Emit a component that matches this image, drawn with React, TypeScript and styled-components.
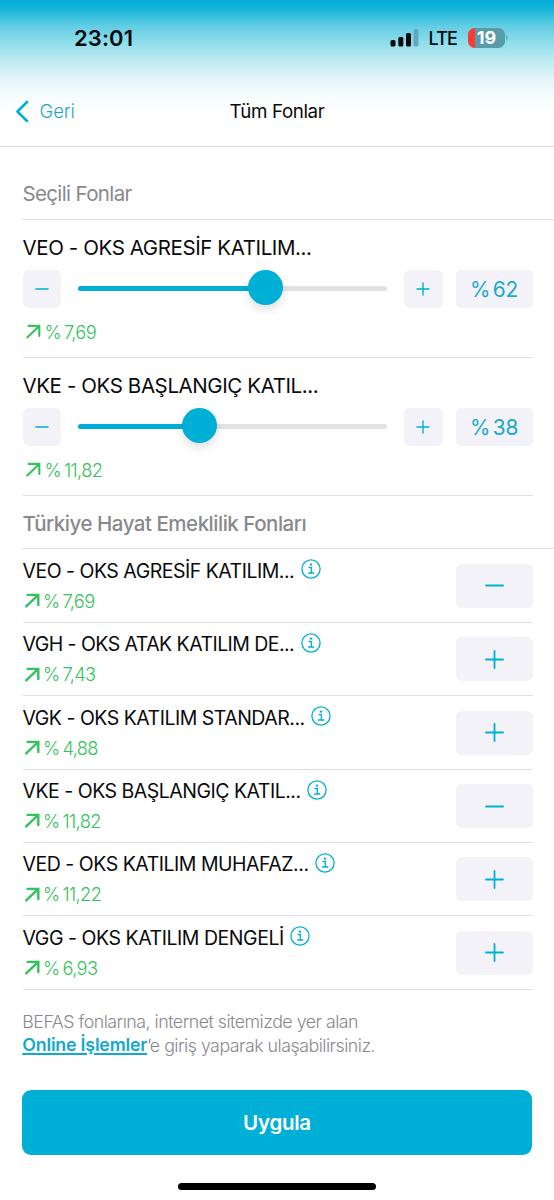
import React, { useState } from "react";
import styled, { createGlobalStyle } from "styled-components";

const CYAN = "#00afd5";
const GREEN = "#34c25e";
const LINE = "#dfe0e2";
const PANEL = "#f2f2f8";
const GRAY = "#88898d";

const GlobalStyle = createGlobalStyle`
  * { box-sizing: border-box; }
  body { margin: 0; background: #fff; font-family: Inter, "Liberation Sans", sans-serif; color: #0a0a0c; }
  button { font: inherit; border: 0; padding: 0; margin: 0; background: none; cursor: pointer; }
  svg { display: block; flex: none; }
`;

const Screen = styled.div`
  width: 554px;
  height: 1200px;
  display: flex;
  flex-direction: column;
  overflow: hidden;
  background: #fff;
`;

const Header = styled.header`
  height: 147px;
  flex: none;
  border-bottom: 1px solid #dcdee0;
  background: linear-gradient(
    #04aed6 0px,
    #12b4d9 8px,
    #62cde4 26px,
    #92dfec 44px,
    #c2ebf3 62px,
    #e4f6fa 80px,
    #f8fdfe 98px,
    #fff 116px
  );
`;

const StatusBar = styled.div`
  height: 75px;
  padding: 0 46px 0 74px;
  display: flex;
  align-items: center;
  color: #04090c;
`;

const Clock = styled.span`
  flex: 1;
  font-size: 22px;
  font-weight: 600;
  letter-spacing: 0.1px;
`;

const Network = styled.span`
  margin: 1px 11px 0 10px;
  font-size: 18px;
  font-weight: 500;
  letter-spacing: -0.9px;
`;

const Battery = styled.div`
  width: 37px;
  height: 20px;
  border-radius: 6.5px;
  background: linear-gradient(90deg, #ff3b30 7px, #589ba9 7px);
  color: #fff;
  font-size: 18px;
  font-weight: 700;
  line-height: 20px;
  text-align: center;
  letter-spacing: 0;
`;

const NavBar = styled.nav`
  height: 71px;
  padding: 1px 15px 0;
  display: grid;
  grid-template-columns: 1fr auto 1fr;
  align-items: center;
`;

const Back = styled.button`
  display: flex;
  align-items: center;
  gap: 10.5px;
  color: #1aa9cd;
  font-size: 18.5px;
  font-weight: 300;
  line-height: 24px;
  letter-spacing: -0.1px;
`;

const PageTitle = styled.h1`
  margin: 1px 0 0;
  font-size: 18.8px;
  font-weight: 400;
  line-height: 24px;
  letter-spacing: -0.4px;
`;

const SectionTitle = styled.h2<{ $height: number; $medium?: boolean }>`
  height: ${(p) => p.$height}px;
  flex: none;
  margin: 0 0 0 22.4px;
  padding-bottom: ${(p) => (p.$medium ? 11.6 : 12)}px;
  border-bottom: 1px solid ${LINE};
  display: flex;
  align-items: flex-end;
  color: ${GRAY};
  font-size: 20.5px;
  font-weight: ${(p) => (p.$medium ? 500 : 400)};
  letter-spacing: ${(p) => (p.$medium ? -0.48 : -0.62)}px;
  line-height: 26px;
`;

const SelectedCard = styled.section`
  height: 138.2px;
  flex: none;
  margin: 0 21.5px 0 22.5px;
  padding-top: 15px;
  border-bottom: 1px solid ${LINE};
`;

const FundName = styled.span<{ $size: number; $tracking: number }>`
  display: block;
  white-space: nowrap;
  font-size: ${(p) => p.$size}px;
  letter-spacing: ${(p) => p.$tracking}px;
  line-height: 26px;
`;

const Controls = styled.div`
  height: 39px;
  margin-top: 8.3px;
  display: flex;
  align-items: center;
`;

const StepButton = styled.button`
  width: 38.5px;
  height: 38.5px;
  flex: none;
  border-radius: 6px;
  background: ${PANEL};
  color: ${CYAN};
  display: grid;
  place-items: center;
`;

const Track = styled.div`
  width: 309px;
  height: 5px;
  margin: 0 17px;
  border-radius: 3px;
  background: #e2e2e5;
  display: flex;
  align-items: center;
`;

const Fill = styled.div`
  height: 5px;
  border-radius: 3px 0 0 3px;
  background: ${CYAN};
`;

const Thumb = styled.div`
  width: 35px;
  height: 35px;
  flex: none;
  margin: -2px 0 0 -17.5px;
  border-radius: 50%;
  background: ${CYAN};
  box-shadow: 0 5px 10px rgba(0, 0, 0, 0.12);
`;

const Percent = styled.div`
  width: 77px;
  height: 38.5px;
  margin-left: 13px;
  border-radius: 5px;
  background: ${PANEL};
  color: #1aa9cd;
  font-size: 20.8px;
  line-height: 39px;
  text-align: center;
  letter-spacing: -0.2px;
  word-spacing: -3px;
`;

const Gain = styled.div<{ $indent: number; $top: number }>`
  margin: ${(p) => p.$top}px 0 0 ${(p) => p.$indent}px;
  display: flex;
  align-items: center;
  gap: 3.5px;
  color: ${GREEN};
  font-size: 18.3px;
  font-weight: 300;
  line-height: 24px;
  letter-spacing: -0.65px;
  word-spacing: -1.5px;
`;

const FundRow = styled.div`
  height: 73.4px;
  flex: none;
  margin: 0 21.5px 0 22.5px;
  border-bottom: 1px solid ${LINE};
  display: flex;
  justify-content: space-between;
`;

const FundText = styled.div`
  padding-top: 8.4px;
`;

const NameLine = styled.div`
  height: 26px;
  display: flex;
  align-items: flex-start;
  gap: 6.5px;

  svg {
    margin-top: 1.6px;
  }
`;

const ToggleButton = styled.button`
  width: 77px;
  height: 44px;
  margin-top: 14.5px;
  border-radius: 6px;
  background: ${PANEL};
  color: ${CYAN};
  display: grid;
  place-items: center;
`;

const Note = styled.p`
  margin: 20px 22.5px 0 22.3px;
  color: ${GRAY};
  font-size: 17.8px;
  font-weight: 300;
  line-height: 24px;
`;

const NoteLine = styled.span<{ $tracking: number }>`
  display: block;
  white-space: nowrap;
  letter-spacing: ${(p) => p.$tracking}px;
`;

const NoteLink = styled.a`
  display: inline-block;
  margin-top: -1px;
  padding-bottom: 1px;
  vertical-align: top;
  color: #12a9cc;
  font-weight: 600;
  text-decoration: underline;
  text-decoration-thickness: 1.5px;
  text-underline-offset: 2px;
  letter-spacing: -0.2px;
`;

const ApplyButton = styled.button`
  height: 65px;
  flex: none;
  margin: 32.5px 22px 0;
  border-radius: 9px;
  background: ${CYAN};
  color: #fff;
  font-size: 20.5px;
  font-weight: 600;
  letter-spacing: -0.25px;
`;

const HomeIndicator = styled.div`
  width: 198px;
  height: 7px;
  flex: none;
  margin: 27.6px auto 0;
  border-radius: 4px;
  background: #000;
`;

const PlusMinus = ({ size, plus, weight }: { size: number; plus: boolean; weight: number }) => (
  <svg width={size} height={size} viewBox={`0 0 ${size} ${size}`} stroke="currentColor" strokeWidth={weight} strokeLinecap="round">
    <path d={`M1 ${size / 2}H${size - 1}`} />
    {plus && <path d={`M${size / 2} 1V${size - 1}`} />}
  </svg>
);

const ArrowUpRight = ({ weight }: { weight: number }) => (
  <svg width="15" height="15" viewBox="0 0 15 15" fill="none" stroke="currentColor" strokeWidth={weight} strokeLinecap="round" strokeLinejoin="miter">
    <path d="M1.2 13.4L13 2.2M2.6 1.9H13.3V12" />
  </svg>
);

const InfoIcon = () => (
  <svg width="20" height="20" viewBox="0 0 20 20" fill="none" stroke={CYAN} strokeWidth="1.3" strokeLinecap="round">
    <circle cx="10" cy="10" r="9.1" />
    <path d="M8.1 8.5H10.3V14M7.6 14H12.8" />
    <circle cx="10" cy="5.6" r="1.2" fill={CYAN} stroke="none" />
  </svg>
);

const selectedFunds = [
  { name: "VEO - OKS AGRESİF KATILIM...", gain: "% 7,69", share: 62, fill: 187, tracking: -0.4 },
  { name: "VKE - OKS BAŞLANGIÇ KATIL...", gain: "% 11,82", share: 38, fill: 121.5, tracking: -0.4 },
];

const funds = [
  { name: "VEO - OKS AGRESİF KATILIM...", gain: "% 7,69", added: true, tracking: -0.5 },
  { name: "VGH - OKS ATAK KATILIM DE...", gain: "% 7,43", added: false, tracking: -0.55 },
  { name: "VGK - OKS KATILIM STANDAR...", gain: "% 4,88", added: false, tracking: -0.5 },
  { name: "VKE - OKS BAŞLANGIÇ KATIL...", gain: "% 11,82", added: true, tracking: -0.5 },
  { name: "VED - OKS KATILIM MUHAFAZ...", gain: "% 11,22", added: false, tracking: -0.48 },
  { name: "VGG - OKS KATILIM DENGELİ", gain: "% 6,93", added: false, tracking: -0.46 },
];

export default function App() {
  const [added, setAdded] = useState(funds.map((f) => f.added));
  const toggle = (i: number) => setAdded((list) => list.map((v, n) => (n === i ? !v : v)));

  return (
    <Screen>
      <GlobalStyle />
      <Header>
        <StatusBar>
          <Clock>23:01</Clock>
          <svg width="29" height="18" viewBox="0 0 29 18" fill="#04090c">
            <rect x="0.5" y="11" width="5" height="6.5" rx="1.5" />
            <rect x="8.3" y="8" width="5" height="9.5" rx="1.5" />
            <rect x="16" y="4" width="5" height="13.5" rx="1.5" />
            <rect x="23.5" y="0.2" width="5" height="17.3" rx="1.5" fill="#5fa9b8" />
          </svg>
          <Network>LTE</Network>
          <Battery>19</Battery>
          <svg width="3" height="7" viewBox="0 0 3 7">
            <path d="M1 0.5C3.4 1.6 3.4 5.4 1 6.5Z" fill="#6cabb8" />
          </svg>
        </StatusBar>
        <NavBar>
          <Back>
            <svg width="14" height="23" viewBox="0 0 14 23" fill="none" stroke={CYAN} strokeWidth="2.6" strokeLinecap="round" strokeLinejoin="round">
              <path d="M12 2L2.4 11.5L12 21" />
            </svg>
            Geri
          </Back>
          <PageTitle>Tüm Fonlar</PageTitle>
        </NavBar>
      </Header>

      <SectionTitle $height={73}>Seçili Fonlar</SectionTitle>
      {selectedFunds.map((f) => (
        <SelectedCard key={f.name}>
          <FundName $size={20.5} $tracking={f.tracking}>{f.name}</FundName>
          <Controls>
            <StepButton aria-label="Azalt"><PlusMinus size={14} plus={false} weight={1.6} /></StepButton>
            <Track>
              <Fill style={{ width: f.fill }} />
              <Thumb />
            </Track>
            <StepButton aria-label="Artır"><PlusMinus size={14} plus weight={1.4} /></StepButton>
            <Percent>% {f.share}</Percent>
          </Controls>
          <Gain $indent={3.5} $top={11.5}><ArrowUpRight weight={2.1} />{f.gain}</Gain>
        </SelectedCard>
      ))}

      <SectionTitle $height={53} $medium>Türkiye Hayat Emeklilik Fonları</SectionTitle>
      {funds.map((f, i) => (
        <FundRow key={f.name}>
          <FundText>
            <NameLine>
              <FundName $size={19.5} $tracking={f.tracking}>{f.name}</FundName>
              <InfoIcon />
            </NameLine>
            <Gain $indent={2} $top={5}><ArrowUpRight weight={2.4} />{f.gain}</Gain>
          </FundText>
          <ToggleButton aria-label={added[i] ? "Çıkar" : "Ekle"} onClick={() => toggle(i)}>
            <PlusMinus size={19} plus={!added[i]} weight={1.8} />
          </ToggleButton>
        </FundRow>
      ))}

      <Note>
        <NoteLine $tracking={-0.5}>BEFAS fonlarına, internet sitemizde yer alan</NoteLine>
        <NoteLine $tracking={-0.5}><NoteLink>Online İşlemler</NoteLink>’e giriş yaparak ulaşabilirsiniz.</NoteLine>
      </Note>
      <ApplyButton>Uygula</ApplyButton>
      <HomeIndicator />
    </Screen>
  );
}
